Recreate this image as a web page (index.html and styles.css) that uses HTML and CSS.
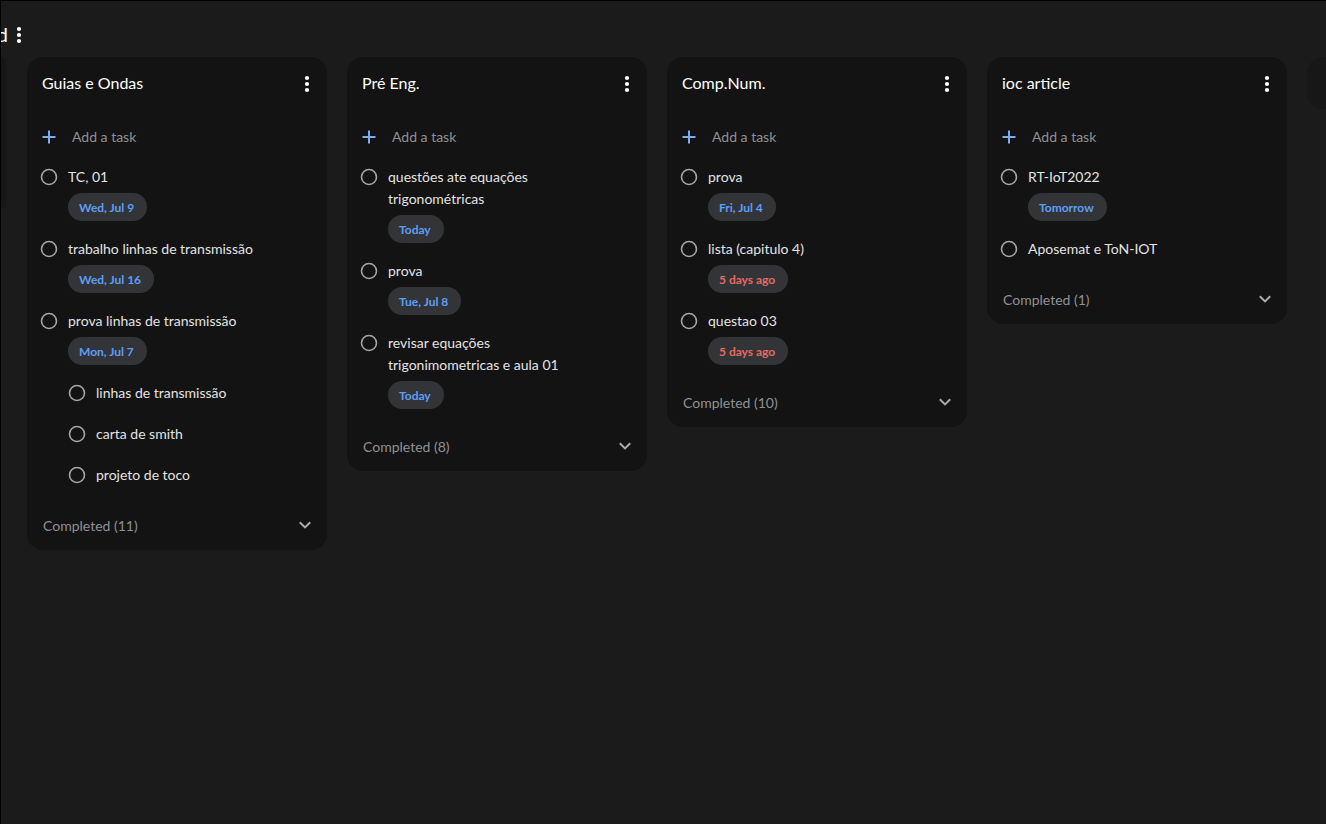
FILE: index.html
```
<!DOCTYPE html>
<html lang="en">
<head>
<meta charset="utf-8">
<title>Tasks</title>
<link rel="stylesheet" href="styles.css">
</head>
<body>
<svg class="defs" aria-hidden="true">
  <symbol id="more" viewBox="0 0 24 24"><circle cx="12" cy="6" r="2.1"/><circle cx="12" cy="12" r="2.1"/><circle cx="12" cy="18" r="2.1"/></symbol>
  <symbol id="plus" viewBox="0 0 20 20"><path d="M9 3.500h2V9h5.500v2H11v5.500H9V11H3.500V9H9z"/></symbol>
  <symbol id="chevron" viewBox="0 0 20 20"><path d="M4.800 6.200 10 11.400l5.200-5.200" fill="none" stroke="currentColor" stroke-width="2"/></symbol>
</svg>
<main class="app">
  <header class="topbar">
    <h1 class="board-name">d</h1>
    <button class="icon-button" aria-label="Board options"><svg class="icon-more"><use href="#more"/></svg></button>
  </header>
  <div class="board">
    <div class="edge edge-left"></div>

    <section class="card">
      <header class="card-head"><h2 class="card-title">Guias e Ondas</h2><button class="icon-button" aria-label="List options"><svg class="icon-more"><use href="#more"/></svg></button></header>
      <button class="add"><svg class="icon"><use href="#plus"/></svg>Add a task</button>
      <ul class="tasks">
        <li class="task"><input class="check" type="checkbox" id="a1"><div class="body"><label for="a1">TC, 01</label><button class="chip">Wed, Jul 9</button></div></li>
        <li class="task"><input class="check" type="checkbox" id="a2"><div class="body"><label for="a2">trabalho linhas de transmissão</label><button class="chip">Wed, Jul 16</button></div></li>
        <li class="task"><input class="check" type="checkbox" id="a3"><div class="body"><label for="a3">prova linhas de transmissão</label><button class="chip">Mon, Jul 7</button></div></li>
        <li class="task sub"><input class="check" type="checkbox" id="a4"><div class="body"><label for="a4">linhas de transmissão</label></div></li>
        <li class="task sub"><input class="check" type="checkbox" id="a5"><div class="body"><label for="a5">carta de smith</label></div></li>
        <li class="task sub"><input class="check" type="checkbox" id="a6"><div class="body"><label for="a6">projeto de toco</label></div></li>
      </ul>
      <button class="completed">Completed (11)<svg class="icon"><use href="#chevron"/></svg></button>
    </section>

    <section class="card">
      <header class="card-head"><h2 class="card-title">Pré Eng.</h2><button class="icon-button" aria-label="List options"><svg class="icon-more"><use href="#more"/></svg></button></header>
      <button class="add"><svg class="icon"><use href="#plus"/></svg>Add a task</button>
      <ul class="tasks">
        <li class="task"><input class="check" type="checkbox" id="b1"><div class="body"><label for="b1">questões ate equações trigonométricas</label><button class="chip">Today</button></div></li>
        <li class="task"><input class="check" type="checkbox" id="b2"><div class="body"><label for="b2">prova</label><button class="chip">Tue, Jul 8</button></div></li>
        <li class="task"><input class="check" type="checkbox" id="b3"><div class="body"><label for="b3">revisar equações trigonimometricas e aula 01</label><button class="chip">Today</button></div></li>
      </ul>
      <button class="completed">Completed (8)<svg class="icon"><use href="#chevron"/></svg></button>
    </section>

    <section class="card">
      <header class="card-head"><h2 class="card-title">Comp.Num.</h2><button class="icon-button" aria-label="List options"><svg class="icon-more"><use href="#more"/></svg></button></header>
      <button class="add"><svg class="icon"><use href="#plus"/></svg>Add a task</button>
      <ul class="tasks">
        <li class="task"><input class="check" type="checkbox" id="c1"><div class="body"><label for="c1">prova</label><button class="chip">Fri, Jul 4</button></div></li>
        <li class="task"><input class="check" type="checkbox" id="c2"><div class="body"><label for="c2">lista (capitulo 4)</label><button class="chip late">5 days ago</button></div></li>
        <li class="task"><input class="check" type="checkbox" id="c3"><div class="body"><label for="c3">questao 03</label><button class="chip late">5 days ago</button></div></li>
      </ul>
      <button class="completed">Completed (10)<svg class="icon"><use href="#chevron"/></svg></button>
    </section>

    <section class="card">
      <header class="card-head"><h2 class="card-title">ioc article</h2><button class="icon-button" aria-label="List options"><svg class="icon-more"><use href="#more"/></svg></button></header>
      <button class="add"><svg class="icon"><use href="#plus"/></svg>Add a task</button>
      <ul class="tasks">
        <li class="task"><input class="check" type="checkbox" id="d1"><div class="body"><label for="d1">RT-IoT2022</label><button class="chip">Tomorrow</button></div></li>
        <li class="task"><input class="check" type="checkbox" id="d2"><div class="body"><label for="d2">Aposemat e ToN-IOT</label></div></li>
      </ul>
      <button class="completed">Completed (1)<svg class="icon"><use href="#chevron"/></svg></button>
    </section>

    <div class="edge edge-right"></div>
  </div>
</main>
</body>
</html>
```
FILE: styles.css
```
* { box-sizing: border-box; }

body {
  margin: 0;
  background: #1b1b1b;
  color: #e3e3e3;
  font: 14px/22px Lato, sans-serif;
}

button {
  padding: 0;
  border: 0;
  background: none;
  color: inherit;
  font: inherit;
  text-align: left;
  cursor: pointer;
}

.defs { display: none; }

.app {
  min-height: 100vh;
  border-top: 1px solid #000;
  border-left: 1px solid #000;
}

.topbar {
  display: flex;
  align-items: center;
  height: 56px;
  padding-top: 12px;
}

.board-name {
  display: flex;
  justify-content: flex-end;
  width: 7px;
  margin: 0 -1px 0 0;
  padding-bottom: 2px;
  overflow: hidden;
  color: #fff;
  font-size: 20px;
  font-weight: 400;
}

.icon-button {
  display: flex;
  color: #fff;
}

.icon-more {
  width: 24px;
  height: 24px;
  fill: currentColor;
}

.icon {
  flex: none;
  width: 20px;
  height: 20px;
  fill: currentColor;
}

.board {
  display: flex;
  align-items: flex-start;
  gap: 20px;
}

.edge { background: #171717; }

.edge-left {
  width: 6px;
  height: 152px;
  border-radius: 0 16px 16px 0;
}

.edge-right {
  width: 19px;
  height: 52px;
  border-radius: 16px 0 0 16px;
}

.card {
  flex: 1 1 0;
  min-width: 0;
  border-radius: 16px;
  background: #131313;
}

.card-head {
  display: flex;
  align-items: center;
  justify-content: space-between;
  height: 54px;
  padding: 0 8px 0 15px;
}

.card-title {
  margin: 0;
  padding-bottom: 2px;
  color: #fff;
  font-size: 16px;
  font-weight: 400;
}

.add {
  display: flex;
  align-items: center;
  gap: 13px;
  width: 100%;
  height: 52px;
  padding: 0 12px;
  color: #8f9196;
}

.add .icon { color: #7cacf8; }

.tasks {
  margin: 0;
  padding: 3px 0 0;
  list-style: none;
}

.task {
  display: flex;
  gap: 10px;
  min-height: 41px;
  padding: 0 60px 0 13px;
}

.task:has(.chip) { padding-bottom: 17px; }

.sub { padding-left: 41px; }

.check {
  appearance: none;
  flex: none;
  width: 18px;
  height: 18px;
  margin: 2px 0;
  border-radius: 50%;
  background: url("data:image/svg+xml,%3Csvg xmlns='http://www.w3.org/2000/svg' viewBox='0 0 18 18'%3E%3Ccircle cx='9' cy='9' r='7.5' fill='none' stroke='%23a6a6a6' stroke-width='1.6'/%3E%3C/svg%3E");
}

.body {
  display: flex;
  flex-direction: column;
  align-items: flex-start;
  gap: 5px;
}

.chip {
  height: 28px;
  padding: 2px 13px 0 11px;
  border-radius: 14px;
  background: #333438;
  color: #5e9ef4;
  font-size: 12px;
  font-weight: 700;
}

.late { color: #e46962; }

.completed {
  display: flex;
  align-items: center;
  justify-content: space-between;
  width: 100%;
  height: 45px;
  padding: 0 12px 4px 16px;
  color: #8f9196;
}

.completed .icon { color: #a9acb3; }
```
